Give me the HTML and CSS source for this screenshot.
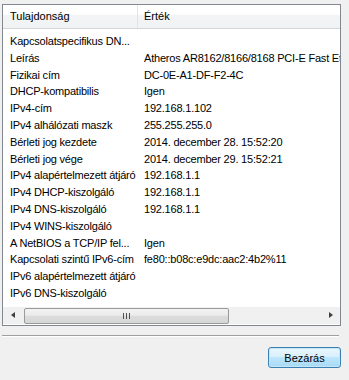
FILE: index.html
```html
<!DOCTYPE html>
<html lang="hu">
<head>
    <meta charset="UTF-8">
    <title>Hálózati kapcsolat részletei</title>
    <link rel="stylesheet" href="styles.css">
</head>
<body>
    <div class="dialog">
        <div class="listbox">
            <div class="list-header">
                <div class="col-name">Tulajdonság</div>
                <div class="col-value">Érték</div>
            </div>
            <div class="list-rows">
                <div class="row"><span class="col-name">Kapcsolatspecifikus DN...</span><span class="col-value"></span></div>
                <div class="row"><span class="col-name">Leírás</span><span class="col-value">Atheros AR8162/8166/8168 PCI-E Fast Ethernet Controller (NDIS 6.30)</span></div>
                <div class="row"><span class="col-name">Fizikai cím</span><span class="col-value">DC-0E-A1-DF-F2-4C</span></div>
                <div class="row"><span class="col-name">DHCP-kompatibilis</span><span class="col-value">Igen</span></div>
                <div class="row"><span class="col-name">IPv4-cím</span><span class="col-value">192.168.1.102</span></div>
                <div class="row"><span class="col-name">IPv4 alhálózati maszk</span><span class="col-value">255.255.255.0</span></div>
                <div class="row"><span class="col-name">Bérleti jog kezdete</span><span class="col-value">2014. december 28. 15:52:20</span></div>
                <div class="row"><span class="col-name">Bérleti jog vége</span><span class="col-value">2014. december 29. 15:52:21</span></div>
                <div class="row"><span class="col-name">IPv4 alapértelmezett átjáró</span><span class="col-value">192.168.1.1</span></div>
                <div class="row"><span class="col-name">IPv4 DHCP-kiszolgáló</span><span class="col-value">192.168.1.1</span></div>
                <div class="row"><span class="col-name">IPv4 DNS-kiszolgáló</span><span class="col-value">192.168.1.1</span></div>
                <div class="row"><span class="col-name">IPv4 WINS-kiszolgáló</span><span class="col-value"></span></div>
                <div class="row"><span class="col-name">A NetBIOS a TCP/IP fel...</span><span class="col-value">Igen</span></div>
                <div class="row"><span class="col-name">Kapcsolati szintű IPv6-cím</span><span class="col-value">fe80::b08c:e9dc:aac2:4b2%11</span></div>
                <div class="row"><span class="col-name">IPv6 alapértelmezett átjáró</span><span class="col-value"></span></div>
                <div class="row"><span class="col-name">IPv6 DNS-kiszolgáló</span><span class="col-value"></span></div>
            </div>
            <div class="hscroll">
                <div class="arrow arrow-left"></div>
                <div class="track">
                    <div class="thumb"><span class="grip"></span></div>
                </div>
                <div class="arrow arrow-right"></div>
            </div>
        </div>
        <div class="separator"></div>
        <div class="buttons">
            <button class="btn">Bezárás</button>
        </div>
    </div>
</body>
</html>
```
FILE: styles.css
```css
body {
    margin: 0;
    background: #f0f0f0;
    font-family: 'Liberation Sans', Arial, sans-serif;
    font-size: 11px;
    color: #000;
}

.dialog {
    padding: 4px 0 0 2px;
    width: 339px;
}

.listbox {
    height: 320px;
    border: 1px solid #828790;
    background: #fff;
    display: flex;
    flex-direction: column;
    overflow: hidden;
}

.list-header {
    display: flex;
    height: 23px;
    flex-shrink: 0;
    background: linear-gradient(#ffffff 0%, #ffffff 40%, #f3f4f6 45%, #f1f2f4 100%);
    border-bottom: 1px solid #d5d5d5;
}

.list-header div {
    line-height: 23px;
}

.list-header .col-name {
    border-right: 1px solid #e3e4e6;
}

.col-name {
    width: 127px;
    padding-left: 7px;
    flex-shrink: 0;
    white-space: nowrap;
    overflow: hidden;
}

.col-value {
    padding-left: 6px;
    white-space: nowrap;
}

.list-rows {
    flex: 1;
    padding-top: 4px;
    overflow: hidden;
    letter-spacing: -0.2px;
}

.row {
    display: flex;
    height: 16.8px;
    line-height: 16.8px;
}

.row .col-name {
    width: 128px;
}

.hscroll {
    height: 17px;
    flex-shrink: 0;
    display: flex;
    align-items: center;
    background: #f0f0f0;
    margin: 0 0 1px 0;
}

.arrow {
    width: 17px;
    height: 17px;
    position: relative;
    flex-shrink: 0;
}

.arrow::after {
    content: "";
    position: absolute;
    top: 5px;
    border-top: 3.5px solid transparent;
    border-bottom: 3.5px solid transparent;
}

.arrow-left::after {
    left: 8px;
    border-right: 4px solid #404040;
}

.arrow-right::after {
    left: 6px;
    border-left: 4px solid #404040;
}

.track {
    flex: 1;
    height: 17px;
    padding: 1px 0 0 4px;
    box-sizing: border-box;
}

.thumb {
    width: 203px;
    height: 14px;
    border: 1px solid #9a9a9a;
    border-radius: 2px;
    background: linear-gradient(#f2f2f2 0%, #ebebeb 45%, #dcdcdc 50%, #d6d6d6 100%);
    display: flex;
    align-items: center;
    justify-content: center;
}

.grip {
    width: 7px;
    height: 6px;
    background: linear-gradient(90deg, #505050 0 1px, transparent 1px 3px, #505050 3px 4px, transparent 4px 6px, #505050 6px 7px);
}

.separator {
    margin-top: 9px;
    width: 337px;
    border-top: 1px solid #a0a0a0;
    border-bottom: 1px solid #fff;
}

.buttons {
    display: flex;
    justify-content: flex-end;
    padding-top: 10px;
}

.btn {
    width: 73px;
    height: 21px;
    border: 1px solid #3c7fb1;
    border-radius: 3px;
    background: linear-gradient(#eaf6fd 0%, #d9f0fc 45%, #bee6fd 50%, #a7d9f5 100%);
    box-shadow: inset 0 0 0 1px #c3e6f9;
    font-family: 'Liberation Sans', Arial, sans-serif;
    font-size: 11px;
    color: #000;
    padding: 0;
}
```
